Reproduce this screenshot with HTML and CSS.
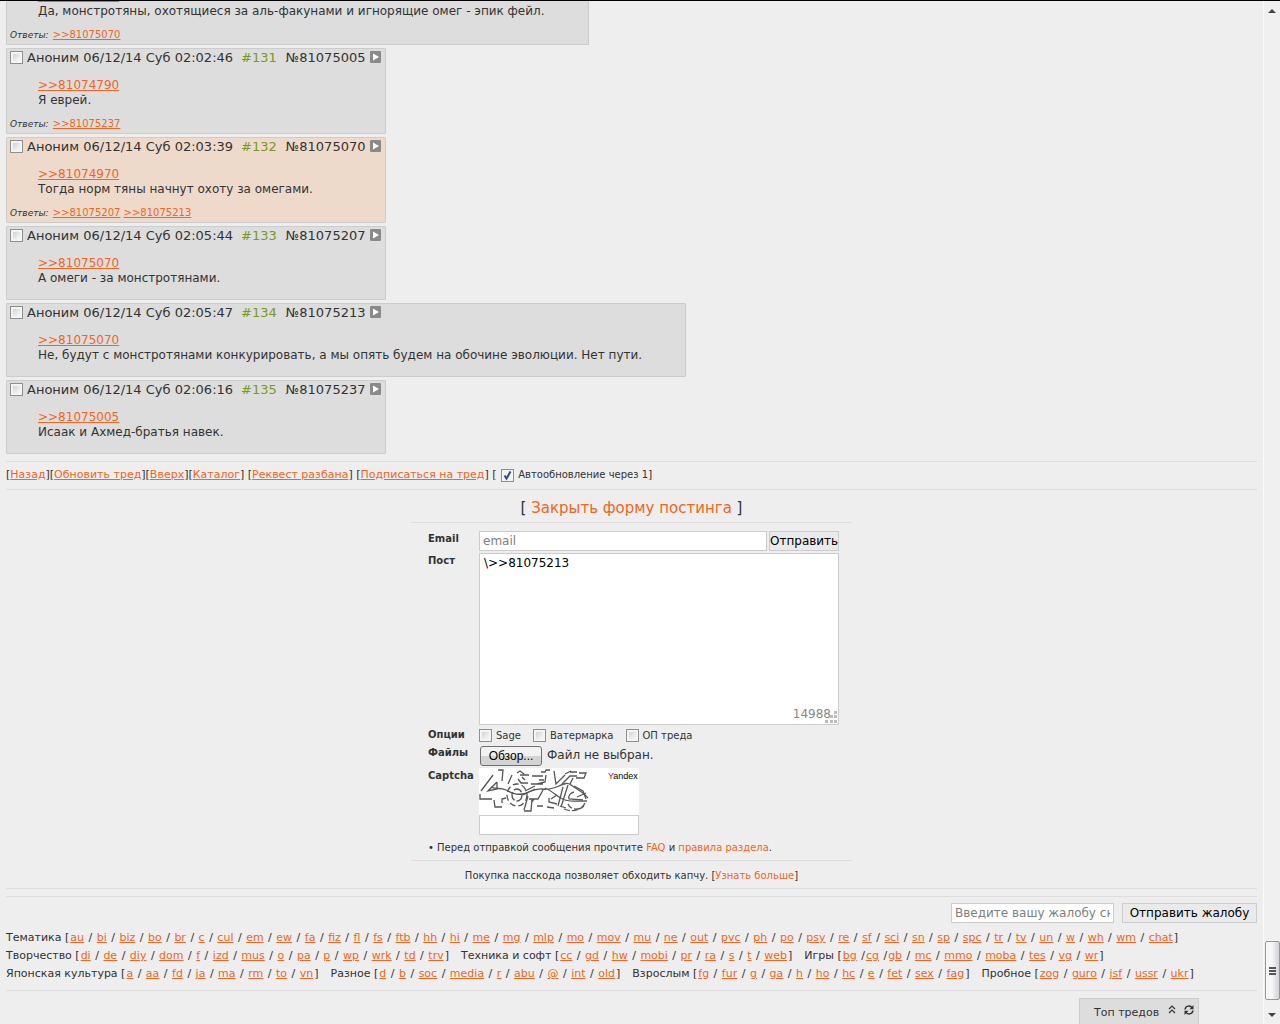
FILE: index.html
```
<!DOCTYPE html>
<html lang="ru">
<head>
<meta charset="utf-8">
<title>Тред</title>
<link rel="stylesheet" href="styles.css">
</head>
<body>
<svg class="defs" aria-hidden="true">
  <symbol id="play" viewBox="0 0 11 12"><rect width="11" height="12" rx="1" fill="#8a8a8a"/><path d="M3 2.500 9 6 3 9.500z" fill="#fff"/></symbol>
</svg>
<div class="window">
<main class="page">
  <section class="thread">
    <article class="post">
      <div class="comment"><a href="#">&gt;&gt;81074790</a><br>Да, монстротяны, охотящиеся за аль-факунами и игнорящие омег - эпик фейл.</div>
      <div class="refs"><i>Ответы:</i> <a href="#">&gt;&gt;81075070</a></div>
    </article>
    <article class="post">
      <header class="head"><label><input type="checkbox" class="check"> Аноним 06/12/14 Суб 02:02:46</label><span class="num">#131</span><span>№81075005</span><svg class="play"><use href="#play"/></svg></header>
      <div class="comment"><a href="#">&gt;&gt;81074790</a><br>Я еврей.</div>
      <div class="refs"><i>Ответы:</i> <a href="#">&gt;&gt;81075237</a></div>
    </article>
    <article class="post marked">
      <header class="head"><label><input type="checkbox" class="check"> Аноним 06/12/14 Суб 02:03:39</label><span class="num">#132</span><span>№81075070</span><svg class="play"><use href="#play"/></svg></header>
      <div class="comment"><a href="#">&gt;&gt;81074970</a><br>Тогда норм тяны начнут охоту за омегами.</div>
      <div class="refs"><i>Ответы:</i> <a href="#">&gt;&gt;81075207</a> <a href="#">&gt;&gt;81075213</a></div>
    </article>
    <article class="post">
      <header class="head"><label><input type="checkbox" class="check"> Аноним 06/12/14 Суб 02:05:44</label><span class="num">#133</span><span>№81075207</span><svg class="play"><use href="#play"/></svg></header>
      <div class="comment"><a href="#">&gt;&gt;81075070</a><br>А омеги - за монстротянами.</div>
    </article>
    <article class="post">
      <header class="head"><label><input type="checkbox" class="check"> Аноним 06/12/14 Суб 02:05:47</label><span class="num">#134</span><span>№81075213</span><svg class="play"><use href="#play"/></svg></header>
      <div class="comment"><a href="#">&gt;&gt;81075070</a><br>Не, будут с монстротянами конкурировать, а мы опять будем на обочине эволюции. Нет пути.</div>
    </article>
    <article class="post">
      <header class="head"><label><input type="checkbox" class="check"> Аноним 06/12/14 Суб 02:06:16</label><span class="num">#135</span><span>№81075237</span><svg class="play"><use href="#play"/></svg></header>
      <div class="comment"><a href="#">&gt;&gt;81075005</a><br>Исаак и Ахмед-братья навек.</div>
    </article>
  </section>

  <nav class="tools">[<a href="#">Назад</a>][<a href="#">Обновить тред</a>][<a href="#">Вверх</a>][<a href="#">Каталог</a>] [<a href="#">Реквест разбана</a>] [<a href="#">Подписаться на тред</a>] [ <label><input type="checkbox" class="check" checked> Автообновление через 1</label>]</nav>

  <section class="posting">
    <h2 class="toggle">[ <a href="#">Закрыть форму постинга</a> ]</h2>
    <form class="form">
      <label class="name" for="email">Email</label>
      <div class="row"><input id="email" class="box email" type="text" placeholder="email"><button type="button" class="button send">Отправить</button></div>
      <label class="name" for="text">Пост</label>
      <div class="area"><textarea id="text" class="box text">\&gt;&gt;81075213</textarea><span class="count">14988</span>
        <svg class="grip" viewBox="0 0 12 12"><path d="M9 0h3v3H9zM5 4h3v3H5zM9 4h3v3H9zM0 9h3v3H0zM5 9h3v3H5zM9 9h3v3H9z" fill="#bbb"/></svg></div>
      <span class="name">Опции</span>
      <div class="row options"><label><input type="checkbox" class="check">Sage</label><label><input type="checkbox" class="check">Ватермарка</label><label><input type="checkbox" class="check">ОП треда</label></div>
      <label class="name" for="file">Файлы</label>
      <label class="file"><input id="file" type="file" class="file-input"><span class="browse">Обзор...</span>Файл не выбран.</label>
      <label class="name" for="captcha">Captcha</label>
      <div class="captcha">
        <svg class="captcha-image" viewBox="0 0 160 47" role="img" aria-label="Captcha">
          <rect width="160" height="47" fill="#fff"/>
          <g fill="none" stroke="#555" stroke-width="1.300">
            <path d="M19 2h5l-1 11M14 7 2 23M1 26v5h12M15 32l1 7h7M23 35v-4l4-1M18 14v7l-9 2 9-9"/>
            <path d="M12 19c6 3 9 0 15 3s9 5 16 4 12-6 20-5c6 1 12-1 17-3s8-4 12-1 8 5 12 8l5 5M66 20c8 3 13 10 20 12s14 1 22 1"/>
            <path d="M29 16l4-9M38 5l3-2 4 3M41 7h9M53 8h11M39 11l3 4h7M52 16h12M62 4h4l1-2h4M67 7l-1 7-8 2M60 12h5M43 9l3 3"/>
            <ellipse cx="38" cy="27" rx="10" ry="11" stroke-dasharray="6 3"/><ellipse cx="38" cy="27" rx="5" ry="6" stroke-dasharray="9 2"/>
            <path d="M44 27l12-6M46 23l10-5M64 22l-5 9-9 0M49 28l-4 14M45 43h7l1-12M55 31l-2 3M58 38h6M68 39l7 1M70 30v4l8 2M78 27l-6 4"/>
            <path d="M75 3l2 13 9-9M86 6l6-3M83 16l8-8h7M91 4h7M100 5h7l-2 5h-8M94 10l-3 6M89 17l-7 22M84 19l-5 19M95 18l9 5 3 8M95 24c-4 1-6 4-5 7l14 1"/>
            <path d="M81 38l6 2M98 29l9-4"/><path d="M89 36c2 6 13 8 17-1M85 41c8 3 14 2 20-3" stroke-dasharray="6 2"/>
          </g>
          <text class="brand" x="129" y="11"><tspan fill="#d00">Y</tspan>andex</text>
        </svg>
        <input id="captcha" class="box captcha-input" type="text">
      </div>
    </form>
    <p class="note">• Перед отправкой сообщения прочтите <a href="#">FAQ</a> и <a href="#">правила раздела</a>.</p>
    <p class="pass">Покупка пасскода позволяет обходить капчу. [<a href="#">Узнать больше</a>]</p>
  </section>

  <footer class="footer">
    <form class="report"><input class="box complaint" type="text" aria-label="Жалоба" placeholder="Введите вашу жалобу сюда"><button type="button" class="button complain">Отправить жалобу</button></form>
    <nav class="boards">
      <div><span>Тематика [<a href="#">au</a> / <a href="#">bi</a> / <a href="#">biz</a> / <a href="#">bo</a> / <a href="#">br</a> / <a href="#">c</a> / <a href="#">cul</a> / <a href="#">em</a> / <a href="#">ew</a> / <a href="#">fa</a> / <a href="#">fiz</a> / <a href="#">fl</a> / <a href="#">fs</a> / <a href="#">ftb</a> / <a href="#">hh</a> / <a href="#">hi</a> / <a href="#">me</a> / <a href="#">mg</a> / <a href="#">mlp</a> / <a href="#">mo</a> / <a href="#">mov</a> / <a href="#">mu</a> / <a href="#">ne</a> / <a href="#">out</a> / <a href="#">pvc</a> / <a href="#">ph</a> / <a href="#">po</a> / <a href="#">psy</a> / <a href="#">re</a> / <a href="#">sf</a> / <a href="#">sci</a> / <a href="#">sn</a> / <a href="#">sp</a> / <a href="#">spc</a> / <a href="#">tr</a> / <a href="#">tv</a> / <a href="#">un</a> / <a href="#">w</a> / <a href="#">wh</a> / <a href="#">wm</a> / <a href="#">chat</a>]</span></div>
      <div><span>Творчество [<a href="#">di</a> / <a href="#">de</a> / <a href="#">diy</a> / <a href="#">dom</a> / <a href="#">f</a> / <a href="#">izd</a> / <a href="#">mus</a> / <a href="#">o</a> / <a href="#">pa</a> / <a href="#">p</a> / <a href="#">wp</a> / <a href="#">wrk</a> / <a href="#">td</a> / <a href="#">trv</a>]</span><span>Техника и софт [<a href="#">cc</a> / <a href="#">gd</a> / <a href="#">hw</a> / <a href="#">mobi</a> / <a href="#">pr</a> / <a href="#">ra</a> / <a href="#">s</a> / <a href="#">t</a> / <a href="#">web</a>]</span><span>Игры [<a href="#">bg</a> /<a href="#">cg</a> /<a href="#">gb</a> / <a href="#">mc</a> / <a href="#">mmo</a> / <a href="#">moba</a> / <a href="#">tes</a> / <a href="#">vg</a> / <a href="#">wr</a>]</span></div>
      <div><span>Японская культура [<a href="#">a</a> / <a href="#">aa</a> / <a href="#">fd</a> / <a href="#">ja</a> / <a href="#">ma</a> / <a href="#">rm</a> / <a href="#">to</a> / <a href="#">vn</a>]</span><span>Разное [<a href="#">d</a> / <a href="#">b</a> / <a href="#">soc</a> / <a href="#">media</a> / <a href="#">r</a> / <a href="#">abu</a> / <a href="#">@</a> / <a href="#">int</a> / <a href="#">old</a>]</span><span>Взрослым [<a href="#">fg</a> / <a href="#">fur</a> / <a href="#">g</a> / <a href="#">ga</a> / <a href="#">h</a> / <a href="#">ho</a> / <a href="#">hc</a> / <a href="#">e</a> / <a href="#">fet</a> / <a href="#">sex</a> / <a href="#">fag</a>]</span><span>Пробное [<a href="#">zog</a> / <a href="#">guro</a> / <a href="#">jsf</a> / <a href="#">ussr</a> / <a href="#">ukr</a>]</span></div>
    </nav>
    <div class="top-threads"><span>Топ тредов</span>
      <svg width="8" height="9" viewBox="0 0 8 9"><path d="M1 4 4 1l3 3M1 8l3-3 3 3" fill="none" stroke="#333" stroke-width="1.200"/></svg>
      <svg width="10" height="10" viewBox="0 0 10 10"><path d="M1 4.500C1.500 0.500 6.500 0 8.200 3M9 5.500C8.500 9.500 3.500 10 1.800 7" fill="none" stroke="#333" stroke-width="1.500"/><path d="M9.500 0v4.300H5.500zM.5 10V5.700h4z" fill="#333"/></svg>
    </div>
  </footer>
</main>
<aside class="scroll" aria-hidden="true">
  <svg width="8" height="4" viewBox="0 0 8 4"><path d="M4 0l4 4H0z" fill="#444"/></svg>
  <div class="thumb"><i></i><i></i><i></i></div>
  <svg width="8" height="4" viewBox="0 0 8 4"><path d="M4 4l4-4H0z" fill="#444"/></svg>
</aside>
</div>
</body>
</html>
```
FILE: styles.css
```
* { box-sizing: border-box; }
body {
  margin: 0;
  background: #eee;
  color: #333;
  font: 12px/15px "DejaVu Sans", Verdana, sans-serif;
}
a { color: #f26522; }
.defs { display: none; }
.window {
  display: flex;
  height: 100vh;
  overflow: hidden;
  border-top: 1px solid #000;
}
.page { flex: 1; min-width: 0; padding: 0 6px; }

.thread {
  display: flex;
  flex-direction: column;
  align-items: flex-start;
  gap: 3px;
  margin-top: -28px;
  padding-bottom: 7px;
}
.post {
  min-width: 380px;
  padding: 1px 3px 3px;
  background: #ddd;
  border: 1px solid #ccc;
  border-radius: 1px;
}
.marked { background: #eedacb; }
.head { display: flex; align-items: center; height: 14px; font-size: 13px; white-space: nowrap; }
.head label { display: flex; align-items: center; gap: 4px; }
.num { margin: 0 9px 0 8px; color: #789922; }
.play { width: 11px; height: 12px; margin-left: 5px; }
.comment { margin: 14px 40px 10px 28px; }
.refs { font-size: 10px; line-height: 12px; }
.refs i { margin-right: 1px; font-size: 9px; }

.check {
  appearance: none;
  flex: none;
  width: 13px;
  height: 13px;
  margin: 0;
  border: 1px solid #8e8f8f;
  background: linear-gradient(135deg, #c4c8cf, #f8f8f8 80%);
  box-shadow: inset 0 0 0 2px #f4f4f4;
}
.check:checked {
  background: url("data:image/svg+xml,%3Csvg xmlns='http://www.w3.org/2000/svg' viewBox='0 0 11 11'%3E%3Cpath d='M2.500 5.500 4.500 8.500 8.500 1.500' fill='none' stroke='%23354c8c' stroke-width='2'/%3E%3C/svg%3E") #f4f4f4;
  box-shadow: none;
}

.tools {
  display: block;
  padding: 5px 0 7px;
  border: solid #ddd;
  border-width: 1px 0;
  font-size: 11px;
}
.tools label { font-size: 10px; }
.tools .check { vertical-align: middle; margin: 0 1px; }

.posting { width: 441px; margin: 0 auto; position: relative; }
.toggle {
  margin: 0;
  padding: 8px 0 4px;
  border-bottom: 1px solid #ddd;
  font-size: 15px;
  line-height: 20px;
  font-weight: normal;
  text-align: center;
}
.toggle a, .note a, .pass a { text-decoration: none; }
.form {
  display: grid;
  grid-template-columns: 51px 360px;
  row-gap: 2px;
  padding: 8px 17px 0;
}
.name { font-size: 10px; font-weight: bold; }
.row { display: flex; gap: 2px; }
.box, .button {
  height: 20px;
  margin: 0;
  padding: 0 3px;
  border: 1px solid #ccc;
  border-radius: 0;
  background: #fff;
  color: #000;
  font: inherit;
}
.box::placeholder { color: #808080; }
.button { padding: 0; background: #eaeaea; white-space: nowrap; }
.email { flex: 1; min-width: 0; }
.send { width: 70px; }
.area { position: relative; height: 172px; }
.text { display: block; width: 100%; height: 100%; padding: 2px 4px; resize: none; }
.count { position: absolute; right: 8px; bottom: 3px; color: #888; }
.grip { position: absolute; right: 2px; bottom: 2px; width: 12px; height: 12px; }
.options { gap: 12px; align-items: center; height: 16px; font-size: 10px; }
.options label { display: flex; align-items: center; gap: 4px; }
.file { display: flex; align-items: center; gap: 5px; height: 21px; padding-left: 1px; }
.file-input { position: absolute; opacity: 0; width: 1px; height: 1px; }
.browse {
  width: 62px;
  height: 20px;
  border: 1px solid #707070;
  border-radius: 3px;
  background: linear-gradient(#f2f2f2 50%, #d4d4d4 50%);
  color: #000;
  font: 12px/18px "Liberation Sans", Arial, sans-serif;
  text-align: center;
}
.captcha { display: flex; flex-direction: column; width: 160px; }
.captcha-image { display: block; width: 160px; height: 47px; }
.brand { font: 9px "Liberation Sans", Arial, sans-serif; }
.note, .pass { margin: 0; font-size: 10px; }
.note { padding: 5px 17px 5px; border-bottom: 1px solid #ddd; }
.pass { padding: 7px 0 5px; text-align: center; }

.footer { border-top: 1px solid #ddd; padding-top: 7px; }
.report {
  display: flex;
  justify-content: flex-end;
  gap: 8px;
  padding: 6px 0;
  border-top: 1px solid #ddd;
}
.complaint { width: 163px; }
.complain { width: 135px; }
.boards {
  padding-bottom: 7px;
  border-bottom: 1px solid #ddd;
  font-size: 11px;
  line-height: 18px;
}
.boards div { display: flex; flex-wrap: wrap; column-gap: 12px; }
.boards a { margin: 0 1px; }
.top-threads {
  display: flex;
  justify-content: space-between;
  width: 120px;
  height: 27px;
  margin: 7px 58px 0 auto;
  padding: 6px 4px 0 14px;
  background: #ddd;
  border: 1px solid #ccc;
  font-size: 11px;
  white-space: nowrap;
}
.scroll {
  display: flex;
  flex-direction: column;
  align-items: center;
  width: 17px;
  padding: 8px 0 7px;
  background: #f0f0f0;
  border-left: 1px solid #fafafa;
}
.thumb {
  display: flex;
  flex-direction: column;
  align-items: center;
  justify-content: center;
  gap: 1px;
  width: 15px;
  height: 59px;
  margin: auto 0 13px;
  border: 1px solid #979797;
  border-radius: 2px;
  background: linear-gradient(90deg, #f6f6f6 45%, #d2d2d6);
}
.thumb i { width: 7px; height: 2px; background: #555; }
```
